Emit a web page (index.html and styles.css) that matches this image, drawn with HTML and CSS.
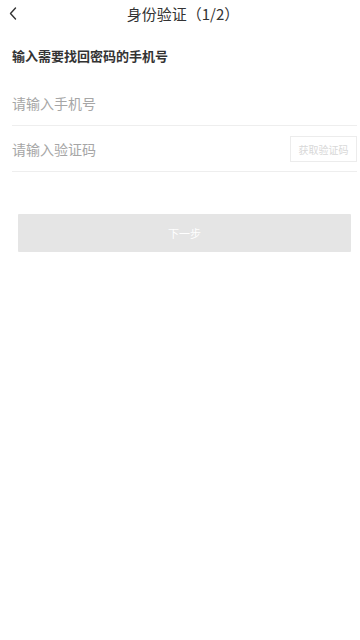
FILE: index.html
```html
<!DOCTYPE html>
<html lang="zh">
<head>
<meta charset="utf-8">
<meta name="viewport" content="width=360">
<link rel="stylesheet" href="styles.css">
</head>
<body>
<header class="nav">
  <span class="back"><svg width="8" height="13" viewBox="0 0 8 13"><path d="M6.5 1 L1.5 6.5 L6.5 12" fill="none" stroke="#333" stroke-width="1.4" stroke-linecap="round" stroke-linejoin="round"/></svg></span>
  <h1 class="title">身份验证（1/2）</h1>
</header>
<main>
  <p class="hint">输入需要找回密码的手机号</p>
  <div class="form">
    <div class="row"><input class="field" type="text" placeholder="请输入手机号"></div>
    <div class="row"><input class="field" type="text" placeholder="请输入验证码"><span class="code-btn">获取验证码</span></div>
  </div>
  <div class="next">下一步</div>
</main>
</body>
</html>
```
FILE: styles.css
```css
* { box-sizing: border-box; }
html, body { margin: 0; padding: 0; background: #fff; }
body { font-family: "Noto Sans CJK SC", "Noto Sans", sans-serif; color: #333; width: 360px; }
.nav { height: 28px; display: flex; align-items: center; justify-content: center; position: relative; }
.back { position: absolute; left: 9px; top: 7px; width: 8px; height: 13px; display: flex; }
.title { margin: 0; font-size: 15px; font-weight: normal; line-height: 28px; color: #333; padding-left: 6px; }
.hint { margin: 18px 0 0 12px; font-size: 13px; font-weight: bold; line-height: 20px; color: #333; }
.form { margin: 14px 3px 0 12px; }
.row { height: 46px; border-bottom: 1px solid #eeeeee; display: flex; align-items: center; justify-content: space-between; padding-top: 1px; }
.field { border: none; outline: none; padding: 0; margin: 0; font-family: inherit; font-size: 14px; color: #333; background: transparent; flex: 1; min-width: 0; }
.field::placeholder { color: #a6a6a6; }
.code-btn { width: 67px; height: 26px; border: 1px solid #ececec; font-size: 10px; color: #d8d8d8; display: flex; align-items: center; justify-content: center; flex: none; }
.next { margin: 42px 9px 0 18px; height: 38px; background: #e5e5e5; color: #fff; font-size: 11px; display: flex; align-items: center; justify-content: center; border-radius: 1px; }
```
